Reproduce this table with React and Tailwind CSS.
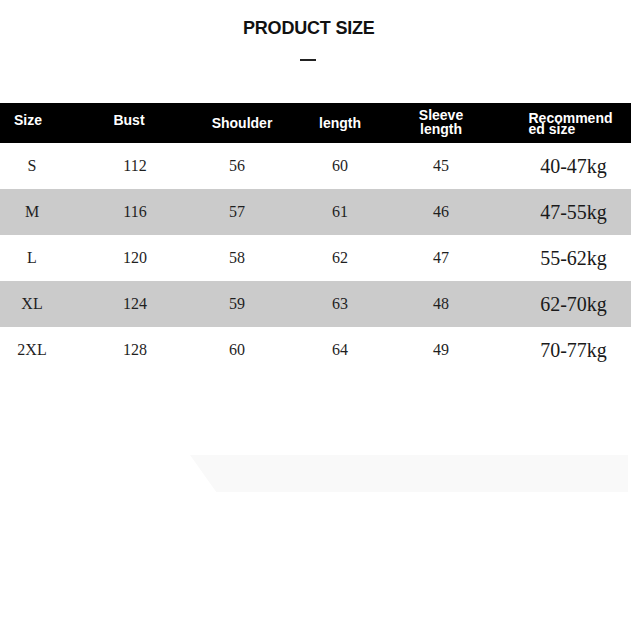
import React from 'react';

const columns = [
  { head: 'Size', headClass: 'pb-[5px] pr-[6px]', cellClass: 'pl-[2px]' },
  { head: 'Bust', headClass: 'pb-[5px]', cellClass: 'pl-[12px]' },
  { head: 'Shoulder', headClass: '', cellClass: 'pr-[10px]' },
  { head: 'length', headClass: '', cellClass: '' },
  { head: 'Sleeve length', headClass: 'pb-[2px]', cellClass: '' },
  { head: 'Recommend ed size', headClass: 'pl-[20px]', cellClass: 'pl-[26px]' },
];

const rows = [
  ['S', '112', '56', '60', '45', '40-47kg'],
  ['M', '116', '57', '61', '46', '47-55kg'],
  ['L', '120', '58', '62', '47', '55-62kg'],
  ['XL', '124', '59', '63', '48', '62-70kg'],
  ['2XL', '128', '60', '64', '49', '70-77kg'],
];

const grid = 'grid grid-cols-[62px_134px_92px_104px_98px_141px]';

const cellText = (i) => (i === 5 ? 'text-[20px] text-[#1a1a1a]' : 'text-[16px] text-[#1f1f1f]');

const App = () => {
  return (
    <div className="w-[631px] h-[631px] bg-white overflow-hidden">
      <div className="pt-[19px] pl-[243px] text-[18px] leading-[18px] font-bold text-[#111] font-['Liberation_Sans',sans-serif] tracking-[-0.2px]">
        PRODUCT SIZE
      </div>
      <div className="mt-[22px] ml-[300px] w-[16px] h-[2px] bg-[#222]" />

      <div className="mt-[42px]">
        {/* header */}
        <div className={`${grid} h-[40px] bg-black text-white font-['Liberation_Sans',sans-serif] font-bold text-[14px]`}>
          {columns.map((col, i) => (
            <div key={i} className={`flex items-center justify-center text-center ${col.headClass}`}>
              {i === 4 ? (
                <div className="leading-[14px]">
                  Sleeve<br />length
                </div>
              ) : i === 5 ? (
                <div className="leading-[11px] text-left pt-[1px]">
                  Recommend<br />ed size
                </div>
              ) : (
                col.head
              )}
            </div>
          ))}
        </div>

        {rows.map((row, r) => (
          <div
            key={r}
            className={`${grid} h-[46px] ${r % 2 === 1 ? 'bg-[#cbcbcb]' : 'bg-white'} font-['Liberation_Serif',serif]`}
          >
            {row.map((val, i) => (
              <div
                key={i}
                className={`flex items-center justify-center ${cellText(i)} ${columns[i].cellClass}`}
              >
                {val}
              </div>
            ))}
          </div>
        ))}
      </div>

      <div className="mt-[82px] ml-[190px] mr-[3px] h-[37px] bg-[#f9f9f9] [clip-path:polygon(0_0,100%_0,100%_100%,6%_100%)]" />
    </div>
  );
};

export default App;
